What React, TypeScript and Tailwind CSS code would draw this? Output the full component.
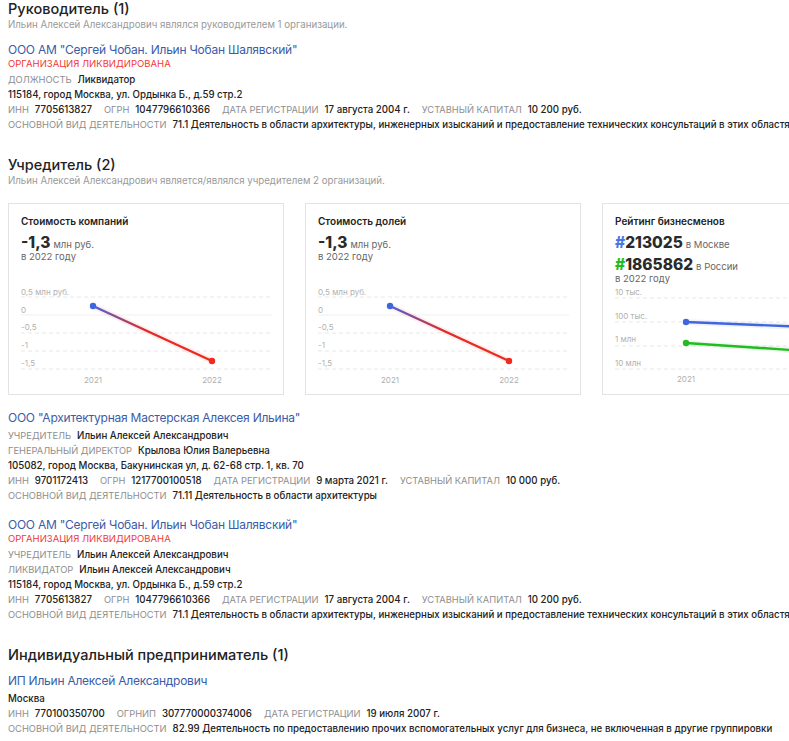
import React from "react";

const F = { fontFamily: "Inter, 'Noto Sans', sans-serif" };

function Heading({ children }: { children: React.ReactNode }) {
  return <div className="text-[14.5px] leading-[17px] font-medium text-[#222]">{children}</div>;
}
function Sub({ children }: { children: React.ReactNode }) {
  return <div className="mt-[1px] text-[9.7px] leading-[14px] text-[#9a9a9a]">{children}</div>;
}
function OrgLink({ children }: { children: React.ReactNode }) {
  return (
    <div className="text-[12px] leading-[16px] tracking-[-0.02em] whitespace-nowrap text-[#3b5ca8]">{children}</div>
  );
}
function Status() {
  return <div className="text-[9.5px] leading-[12px] text-[#ee3b34]">ОРГАНИЗАЦИЯ ЛИКВИДИРОВАНА</div>;
}
type Pair = [string, string];
function Row({ pairs }: { pairs: Pair[] }) {
  return (
    <div className="flex h-[15px] whitespace-nowrap leading-[15px]">
      {pairs.map(([l, v], i) => (
        <span key={i} className="mr-[12px] flex shrink-0">
          {l && <span className="mr-[6px] text-[9.3px] text-[#8e8e8e]">{l}</span>}
          <span className="text-[9.7px] font-medium text-[#222]">{v}</span>
        </span>
      ))}
    </div>
  );
}

function ValueChart({ title, gid }: { title: string; gid: string }) {
  return (
    <div className="flex h-[192px] w-[276px] shrink-0 flex-col border border-[#e3e3e3] bg-white">
      <div className="px-[12px] pt-[12px]">
        <div className="h-[11px] text-[10px] leading-[11px] font-semibold text-[#222]">{title}</div>
        <div className="mt-[7px] h-[17px] leading-[17px] whitespace-nowrap">
          <span className="text-[15.5px] font-extrabold text-[#2a2a2a]">-1,3</span>
          <span className="ml-[3px] text-[9.5px] text-[#666]">млн руб.</span>
        </div>
        <div className="h-[12px] text-[9.5px] leading-[12px] text-[#666]">в 2022 году</div>
      </div>
      <svg width="274" height="131" className="block">
        <defs>
          <linearGradient id={gid} x1="84" y1="0" x2="203" y2="0" gradientUnits="userSpaceOnUse">
            <stop offset="0" stopColor="#4466dd" />
            <stop offset="0.45" stopColor="#e02a2a" />
            <stop offset="1" stopColor="#f02a1c" />
          </linearGradient>
        </defs>
        {[34, 70, 88, 106].map((y) => (
          <line key={y} x1="12" x2="263" y1={y} y2={y} stroke="#e8e8e8" strokeDasharray="4 3" strokeWidth="1" />
        ))}
        <line x1="12" x2="263" y1="52" y2="52" stroke="#efefef" strokeWidth="1" />
        <g fill="#b0b0b0" fontSize="8" style={F}>
          <text x="12" y="32">0,5 млн руб.</text>
          <text x="12" y="50">0</text>
          <text x="12" y="67">-0,5</text>
          <text x="12" y="85">-1</text>
          <text x="12" y="103">-1,5</text>
          <text x="84" y="120" textAnchor="middle">2021</text>
          <text x="203" y="120" textAnchor="middle">2022</text>
        </g>
        <line x1="84" y1="43" x2="203" y2="98" stroke="#f02a1c" strokeOpacity="0.08" strokeWidth="6" strokeLinecap="round" />
        <line x1="84" y1="43" x2="203" y2="98" stroke={`url(#${gid})`} strokeWidth="2.4" />
        <circle cx="84" cy="43" r="3.2" fill="#3f66dd" />
        <circle cx="203" cy="98" r="3.2" fill="#f02a1c" />
      </svg>
    </div>
  );
}

function RatingChart() {
  return (
    <div className="flex h-[192px] w-[276px] shrink-0 flex-col border border-[#e3e3e3] bg-white">
      <div className="px-[12px] pt-[12px]">
        <div className="h-[11px] text-[10px] leading-[11px] font-semibold text-[#222]">Рейтинг бизнесменов</div>
        <div className="mt-[7px] h-[17px] leading-[17px] whitespace-nowrap">
          <span className="text-[15.5px] font-extrabold text-[#2a2a2a]">
            <span className="text-[#4a78e0]">#</span>213025
          </span>
          <span className="ml-[3px] text-[9.5px] text-[#666]">в Москве</span>
        </div>
        <div className="mt-[5px] h-[17px] leading-[17px] whitespace-nowrap">
          <span className="text-[15.5px] font-extrabold text-[#2a2a2a]">
            <span className="text-[#22bb22]">#</span>1865862
          </span>
          <span className="ml-[3px] text-[9.5px] text-[#666]">в России</span>
        </div>
        <div className="h-[11px] text-[9.5px] leading-[11px] text-[#666]">в 2022 году</div>
      </div>
      <svg width="274" height="110" className="block">
        {[14, 38, 62, 85].map((y) => (
          <line key={y} x1="12" x2="263" y1={y} y2={y} stroke="#e8e8e8" strokeDasharray="4 3" strokeWidth="1" />
        ))}
        <g fill="#b0b0b0" fontSize="8" style={F}>
          <text x="12" y="11">10 тыс.</text>
          <text x="12" y="35">100 тыс.</text>
          <text x="12" y="58">1 млн</text>
          <text x="12" y="82">10 млн</text>
          <text x="83" y="98" textAnchor="middle">2021</text>
          <text x="203" y="98" textAnchor="middle">2022</text>
        </g>
        <line x1="83" y1="38" x2="203" y2="43" stroke="#3f66dd" strokeOpacity="0.08" strokeWidth="6" />
        <line x1="83" y1="38" x2="203" y2="43" stroke="#3f66dd" strokeWidth="2.4" />
        <line x1="83" y1="59" x2="203" y2="67" stroke="#22bb22" strokeOpacity="0.08" strokeWidth="6" />
        <line x1="83" y1="59" x2="203" y2="67" stroke="#22bb22" strokeWidth="2.4" />
        <circle cx="83" cy="38" r="3.2" fill="#3f66dd" />
        <circle cx="83" cy="59" r="3.2" fill="#22bb22" />
        <circle cx="203" cy="43" r="3.2" fill="#3f66dd" />
        <circle cx="203" cy="67" r="3.2" fill="#22bb22" />
      </svg>
    </div>
  );
}

const chobanRows: Pair[] = [
  ["ИНН", "7705613827"],
  ["ОГРН", "1047796610366"],
  ["ДАТА РЕГИСТРАЦИИ", "17 августа 2004 г."],
  ["УСТАВНЫЙ КАПИТАЛ", "10 200 руб."],
];
const chobanOkved: Pair[] = [
  [
    "ОСНОВНОЙ ВИД ДЕЯТЕЛЬНОСТИ",
    "71.1 Деятельность в области архитектуры, инженерных изысканий и предоставление технических консультаций в этих областях",
  ],
];

export default function App() {
  return (
    <div className="h-[741px] w-[789px] overflow-hidden bg-white pl-2" style={F}>
      {/* Руководитель */}
      <Heading>Руководитель (1)</Heading>
      <Sub>Ильин Алексей Александрович являлся руководителем 1 организации.</Sub>
      <div className="mt-[9.5px]">
        <OrgLink>ООО АМ "Сергей Чобан. Ильин Чобан Шалявский"</OrgLink>
        <Status />
        <div className="mt-[2px]">
          <Row pairs={[["ДОЛЖНОСТЬ", "Ликвидатор"]]} />
          <Row pairs={[["", "115184, город Москва, ул. Ордынка Б., д.59 стр.2"]]} />
          <Row pairs={chobanRows} />
          <Row pairs={chobanOkved} />
        </div>
      </div>

      {/* Учредитель */}
      <div className="mt-[24.5px]">
        <Heading>Учредитель (2)</Heading>
        <Sub>Ильин Алексей Александрович является/являлся учредителем 2 организаций.</Sub>
      </div>
      <div className="mt-[15px] flex gap-[21px]">
        <ValueChart title="Стоимость компаний" gid="gradA" />
        <ValueChart title="Стоимость долей" gid="gradB" />
        <RatingChart />
      </div>
      <div className="mt-[14.5px]">
        <OrgLink>ООО "Архитектурная Мастерская Алексея Ильина"</OrgLink>
        <div className="mt-[2px]">
          <Row pairs={[["УЧРЕДИТЕЛЬ", "Ильин Алексей Александрович"]]} />
          <Row pairs={[["ГЕНЕРАЛЬНЫЙ ДИРЕКТОР", "Крылова Юлия Валерьевна"]]} />
          <Row pairs={[["", "105082, город Москва, Бакунинская ул, д. 62-68 стр. 1, кв. 70"]]} />
          <Row
            pairs={[
              ["ИНН", "9701172413"],
              ["ОГРН", "1217700100518"],
              ["ДАТА РЕГИСТРАЦИИ", "9 марта 2021 г."],
              ["УСТАВНЫЙ КАПИТАЛ", "10 000 руб."],
            ]}
          />
          <Row pairs={[["ОСНОВНОЙ ВИД ДЕЯТЕЛЬНОСТИ", "71.11 Деятельность в области архитектуры"]]} />
        </div>
      </div>
      <div className="mt-[14px]">
        <OrgLink>ООО АМ "Сергей Чобан. Ильин Чобан Шалявский"</OrgLink>
        <Status />
        <div className="mt-[2px]">
          <Row pairs={[["УЧРЕДИТЕЛЬ", "Ильин Алексей Александрович"]]} />
          <Row pairs={[["ЛИКВИДАТОР", "Ильин Алексей Александрович"]]} />
          <Row pairs={[["", "115184, город Москва, ул. Ордынка Б., д.59 стр.2"]]} />
          <Row pairs={chobanRows} />
          <Row pairs={chobanOkved} />
        </div>
      </div>

      {/* ИП */}
      <div className="mt-[24px]">
        <Heading>Индивидуальный предприниматель (1)</Heading>
      </div>
      <div className="mt-[10.5px]">
        <OrgLink>ИП Ильин Алексей Александрович</OrgLink>
        <div className="mt-[2px]">
          <Row pairs={[["", "Москва"]]} />
          <Row
            pairs={[
              ["ИНН", "770100350700"],
              ["ОГРНИП", "307770000374006"],
              ["ДАТА РЕГИСТРАЦИИ", "19 июля 2007 г."],
            ]}
          />
          <Row
            pairs={[
              [
                "ОСНОВНОЙ ВИД ДЕЯТЕЛЬНОСТИ",
                "82.99 Деятельность по предоставлению прочих вспомогательных услуг для бизнеса, не включенная в другие группировки",
              ],
            ]}
          />
        </div>
      </div>
    </div>
  );
}
